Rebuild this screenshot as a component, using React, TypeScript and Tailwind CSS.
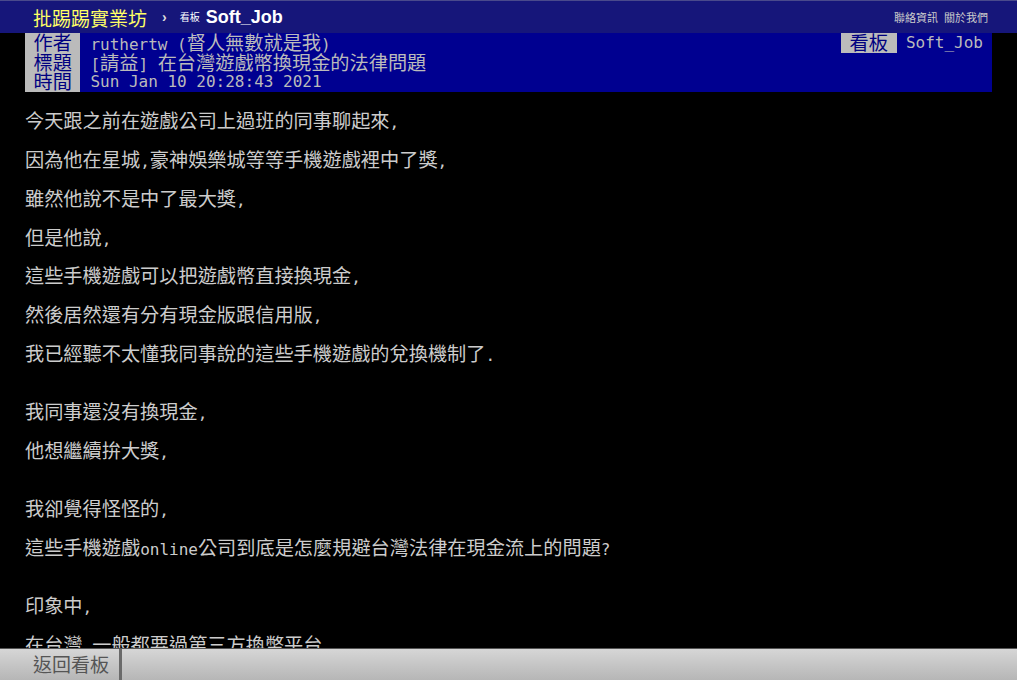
import React from 'react';

const mono = "font-['DejaVu_Sans_Mono','Liberation_Mono',monospace] text-[16px]";
const cjk = "font-['Noto_Sans_CJK_TC','Noto_Sans_CJK_SC',sans-serif] text-[19.2px]";

// split into ascii / wide runs so wide glyphs take two ascii cells like a terminal
function Mixed({ text }: { text: string }) {
  const parts = text.match(/[\x00-\x7F]+|[^\x00-\x7F]+/g) || [];
  return (
    <>
      {parts.map((p, i) => (
        <span key={i} className={/^[\x00-\x7F]/.test(p) ? mono : cjk}>
          {p}
        </span>
      ))}
    </>
  );
}

const body = [
  '',
  '今天跟之前在遊戲公司上過班的同事聊起來,',
  '',
  '因為他在星城,豪神娛樂城等等手機遊戲裡中了獎,',
  '',
  '雖然他說不是中了最大獎,',
  '',
  '但是他說,',
  '',
  '這些手機遊戲可以把遊戲幣直接換現金,',
  '',
  '然後居然還有分有現金版跟信用版,',
  '',
  '我已經聽不太懂我同事說的這些手機遊戲的兌換機制了.',
  '',
  '',
  '我同事還沒有換現金,',
  '',
  '他想繼續拚大獎,',
  '',
  '',
  '我卻覺得怪怪的,',
  '',
  '這些手機遊戲online公司到底是怎麼規避台灣法律在現金流上的問題?',
  '',
  '',
  '印象中,',
  '',
  '在台灣,一般都要過第三方換幣平台.',
  '',
  '可是這些遊戲公司好像都自己來?',
  '',
];

function MetaRow({ tag, value, children }: { tag: string; value: string; children?: React.ReactNode }) {
  return (
    <div className="flex h-[19.6px] leading-[19.6px] items-stretch overflow-visible">
      <div className="bg-[#bbbbbb] text-[#000080] px-[8.5px] shrink-0">
        <Mixed text={tag} />
      </div>
      <div className="flex-1 pl-[10px] text-[#bbbbbb] whitespace-pre">
        <Mixed text={value} />
      </div>
      {children}
    </div>
  );
}

export default function App() {
  return (
    <div className="h-[680px] flex flex-col bg-black overflow-hidden">
      <div className="h-[33px] shrink-0 bg-[#16167a] border-t border-[#4a4a8c] flex items-center pl-[33px] pr-[29px]">
        <span className="font-['Noto_Sans_CJK_TC',sans-serif] text-[19px] text-[#ffff66] leading-none">批踢踢實業坊</span>
        <span className="ml-[15px] text-[#dddddd] text-[14px] font-['Liberation_Sans',sans-serif] font-bold leading-none">›</span>
        <span className="ml-[13px] text-[#ffffff] text-[10px] font-['Noto_Sans_CJK_TC',sans-serif] leading-none">看板</span>
        <span className="ml-[6px] text-white text-[18px] font-bold font-['Liberation_Sans',sans-serif] leading-none">Soft_Job</span>
        <div className="ml-auto flex gap-[6px] text-[11px] text-[#cccccc] font-['Noto_Sans_CJK_TC',sans-serif]">
          <span>聯絡資訊</span>
          <span>關於我們</span>
        </div>
      </div>

      <div className="flex-1 overflow-hidden px-[25px]">
        <div className="bg-[#000090]">
          <MetaRow tag="作者" value="ruthertw (督人無數就是我)">
            <div className="bg-[#bbbbbb] text-[#000080] px-[9px] shrink-0">
              <Mixed text="看板" />
            </div>
            <div className="text-[#bbbbbb] pl-[9px] pr-[9px]">
              <Mixed text="Soft_Job" />
            </div>
          </MetaRow>
          <MetaRow tag="標題" value="[請益] 在台灣遊戲幣換現金的法律問題" />
          <MetaRow tag="時間" value="Sun Jan 10 20:28:43 2021" />
        </div>
        <div className="text-[#cccccc]">
          {body.map((line, i) => (
            <div key={i} className="h-[19.4px] leading-[19.4px] whitespace-pre">
              <Mixed text={line} />
            </div>
          ))}
        </div>
      </div>

      <div className="h-[32px] shrink-0 border-t border-[#555555] bg-gradient-to-b from-[#d6d6d6] to-[#b6b6b6] flex">
        <div className="w-[122px] flex items-center pl-[33px] text-[#555555] font-['Noto_Sans_CJK_TC',sans-serif] text-[19px] border-r-[3px] border-[#6a6a6a]">
          返回看板
        </div>
      </div>
    </div>
  );
}
